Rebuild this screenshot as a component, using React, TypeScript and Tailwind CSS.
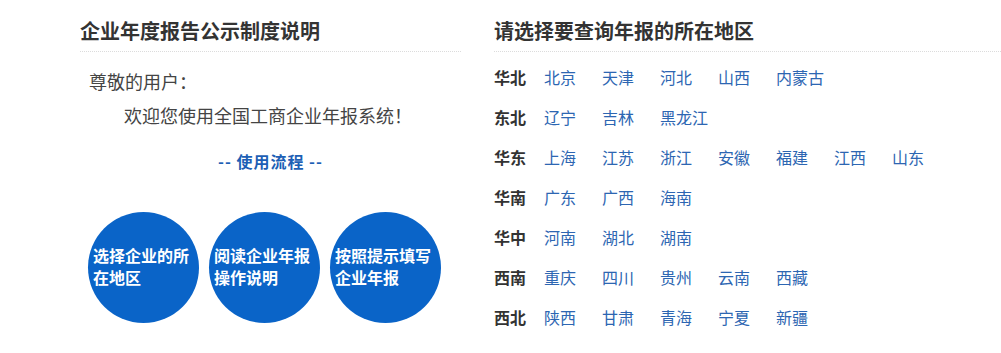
import React from 'react';

const regions: { name: string; provinces: string[] }[] = [
  { name: '华北', provinces: ['北京', '天津', '河北', '山西', '内蒙古'] },
  { name: '东北', provinces: ['辽宁', '吉林', '黑龙江'] },
  { name: '华东', provinces: ['上海', '江苏', '浙江', '安徽', '福建', '江西', '山东'] },
  { name: '华南', provinces: ['广东', '广西', '海南'] },
  { name: '华中', provinces: ['河南', '湖北', '湖南'] },
  { name: '西南', provinces: ['重庆', '四川', '贵州', '云南', '西藏'] },
  { name: '西北', provinces: ['陕西', '甘肃', '青海', '宁夏', '新疆'] },
];

const steps = [
  ['选择企业的所', '在地区'],
  ['阅读企业年报', '操作说明'],
  ['按照提示填写', '企业年报'],
];

export default function App() {
  return (
    <div
      className="w-[1001px] h-[353px] bg-white overflow-hidden flex pl-[80px] pt-[16px]"
      style={{ fontFamily: '"Microsoft YaHei", "Noto Sans CJK SC", "Noto Sans", sans-serif' }}
    >
      {/* left: notice */}
      <div className="w-[381px] shrink-0">
        <h2 className="text-[20px] leading-[30px] font-bold text-[#333]">企业年度报告公示制度说明</h2>
        <div className="mt-[5px] border-t border-dotted border-[#dcdcdc]" />
        <p className="mt-[16px] pl-[9px] text-[18px] leading-[26px] text-[#444]">尊敬的用户：</p>
        <p className="mt-[8px] pl-[44px] text-[18px] leading-[26px] text-[#444]">欢迎您使用全国工商企业年报系统！</p>
        <p className="mt-[23px] pl-[138px] text-[16px] leading-[20px] font-bold text-[#1d5fb5] tracking-[1px]">-- 使用流程 --</p>
        <div className="mt-[41px] pl-[8px] flex gap-[10px]">
          {steps.map((s, i) => (
            <div
              key={i}
              className="w-[111px] h-[111px] rounded-full bg-[#0a64c8] flex flex-col justify-center pl-[5px] pb-[4px] text-white text-[16px] leading-[22px] font-bold"
            >
              <span>{s[0]}</span>
              <span>{s[1]}</span>
            </div>
          ))}
        </div>
      </div>

      {/* right: region picker */}
      <div className="flex-1 ml-[33px]">
        <h2 className="text-[20px] leading-[30px] font-bold text-[#333]">请选择要查询年报的所在地区</h2>
        <div className="mt-[5px] border-t border-dotted border-[#dcdcdc]" />
        <div className="mt-[5px]">
          {regions.map((r) => (
            <div key={r.name} className="flex h-[40px] items-center">
              <span className="w-[50px] text-[16px] font-bold text-[#333]">{r.name}</span>
              {r.provinces.map((p) => (
                <a key={p} className="w-[58px] text-[16px] text-[#2d66b2] cursor-pointer">
                  {p}
                </a>
              ))}
            </div>
          ))}
        </div>
      </div>
    </div>
  );
}
